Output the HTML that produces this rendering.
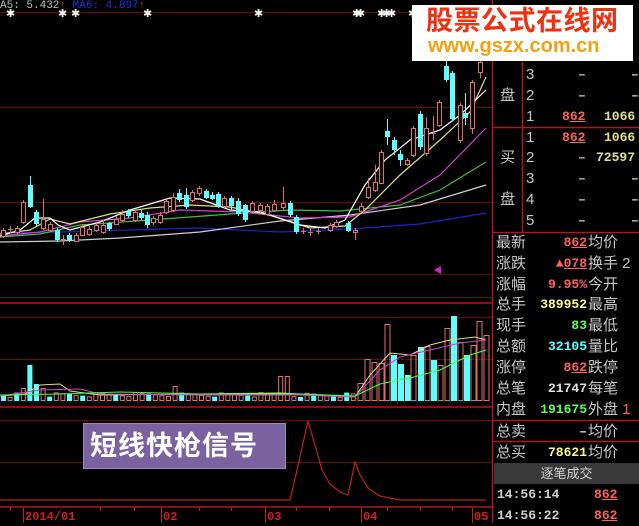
<!DOCTYPE html>
<html><head><meta charset="utf-8"><style>
body{margin:0;width:639px;height:523px;background:#000;overflow:hidden;position:relative;font-family:"Liberation Sans","Noto Sans CJK SC",sans-serif}
.r{position:absolute;left:494px;width:145px;height:20px;font-size:15px;color:#c8c8c8;line-height:20px}
.r .a{position:absolute;left:2px}
.r .v{position:absolute;right:52px;font-family:"Liberation Mono",monospace;font-weight:bold;font-size:13px}
.r .b{position:absolute;left:94px}
.q{position:absolute;font-family:"Liberation Mono",monospace;font-weight:bold;font-size:13px;line-height:20px}
u{text-decoration:underline}
</style></head><body>
<svg width="639" height="523" style="position:absolute;left:0;top:0" xmlns="http://www.w3.org/2000/svg">
<g stroke="#6a0a0a" stroke-width="1">
<line x1="0" y1="12.5" x2="492" y2="12.5"/><line x1="0" y1="107.5" x2="492" y2="107.5"/><line x1="0" y1="202.5" x2="492" y2="202.5"/>
<line x1="0" y1="297.5" x2="492" y2="297.5"/><line x1="0" y1="317.5" x2="492" y2="317.5"/><line x1="0" y1="359.5" x2="492" y2="359.5"/>
<line x1="0" y1="420.5" x2="492" y2="420.5"/><line x1="0" y1="462.5" x2="492" y2="462.5"/>
</g>
<g stroke="#b01818" stroke-width="1.5">
<line x1="0" y1="303" x2="492" y2="303"/><line x1="0" y1="407" x2="492" y2="407"/><line x1="0" y1="507" x2="492" y2="507"/>
<line x1="492.5" y1="0" x2="492.5" y2="523"/><line x1="522.5" y1="62" x2="522.5" y2="232"/>
<line x1="493" y1="127.5" x2="639" y2="127.5"/><line x1="493" y1="232.5" x2="639" y2="232.5"/><line x1="493" y1="420.5" x2="639" y2="420.5"/><line x1="493" y1="441.5" x2="639" y2="441.5"/>
</g>
<line x1="0" y1="274.5" x2="492" y2="274.5" stroke="#5a0a0a"/>
<g stroke="#c02020"><line x1="23.5" y1="507" x2="23.5" y2="523"/><line x1="161.5" y1="507" x2="161.5" y2="523"/><line x1="265.5" y1="507" x2="265.5" y2="523"/><line x1="361.5" y1="507" x2="361.5" y2="523"/><line x1="472.5" y1="507" x2="472.5" y2="523"/>
<line x1="10.5" y1="507" x2="10.5" y2="511"/><line x1="100.5" y1="507" x2="100.5" y2="511"/><line x1="134.5" y1="507" x2="134.5" y2="511"/><line x1="199.5" y1="507" x2="199.5" y2="511"/><line x1="231.5" y1="507" x2="231.5" y2="511"/><line x1="296.5" y1="507" x2="296.5" y2="511"/><line x1="329.5" y1="507" x2="329.5" y2="511"/><line x1="387.5" y1="507" x2="387.5" y2="511"/><line x1="420.5" y1="507" x2="420.5" y2="511"/><line x1="452.5" y1="507" x2="452.5" y2="511"/></g>
<g fill="#d02020" font-family="Liberation Mono,monospace" font-weight="bold" font-size="12"><text x="25" y="520">2014/01</text><text x="163" y="520">02</text><text x="267" y="520">03</text><text x="363" y="520">04</text><text x="474" y="520">05</text></g>
<g fill="none" stroke-width="1.2">
<polyline stroke="#2020d0" points="0,233 60,232 130,230 200,228 280,232 350,229 420,224 486,213"/>
<polyline stroke="#d0d0d0" points="0,242 60,241 120,238 200,232 280,221 350,215 420,205 486,185"/>
<polyline stroke="#40c040" points="0,237 40,234 80,225 150,220 230,214 290,210 340,211 400,205 440,190 486,162"/>
<polyline stroke="#d040d0" points="0,236 40,232 80,222 130,218 180,210 240,212 300,218 350,217 400,200 440,175 486,128"/>
<polyline stroke="#e0e080" points="0,234 30,230 50,219 70,224 110,214 150,208 190,205 230,207 270,215 310,228 345,226 365,210 400,175 440,140 470,112 486,77"/>
<polyline stroke="#ffffff" points="0,236 20,230 35,218 50,218 58,225 70,230 100,222 130,210 170,198 200,199 230,210 260,212 300,225 325,228 345,220 365,185 385,160 410,140 440,130 460,115 486,90"/>
</g>
<g id="cd"></g>
<g fill="none" stroke-width="1">
<polyline stroke="#e0e080" points="0,396 25,394 40,385 60,384 70,391 100,395 200,394 280,393 320,395 355,397 370,375 390,353 410,355 430,345 450,340 475,337 486,340"/>
<polyline stroke="#d040d0" points="0,396 40,390 80,389 100,394 200,395 300,395 355,397 380,370 400,357 430,350 460,343 486,340"/>
<polyline stroke="#40ff40" points="0,395 60,394 120,392 200,394 300,394 355,396 380,384 410,378 440,370 470,355 486,350"/>
</g>
<polyline fill="none" stroke="#c02020" stroke-width="1.2" points="0,500 290,500 297,470 308,421 315,445 322,470 330,484 340,492 348,495 355,462 360,475 368,488 380,496 400,500 486,500"/>
<polygon points="434,270 441,266 441,274" fill="#d020d0"/>
<g fill="#fff" font-size="11" font-weight="bold" font-family="DejaVu Sans,sans-serif"><text x="6" y="17">✱</text><text x="58" y="17">✱</text><text x="71" y="17">✱</text><text x="143" y="17">✱</text><text x="254" y="17">✱</text><text x="352" y="17">✱</text><text x="356" y="17">✱</text><text x="377" y="17">✱</text><text x="382" y="17">✱</text><text x="387" y="17">✱</text><text x="408" y="17">✱</text></g>
</svg>
<div style="position:absolute;left:0;top:0;font-family:'Liberation Mono',monospace;font-size:11px;color:#c0c0c0;white-space:pre;line-height:12px">A5: 5.432<span style="color:#e03030">↑</span> <span style="color:#2030e0">MA6: 4.897</span><span style="color:#e03030">↑</span></div>
<div style="position:absolute;left:412px;top:5px;width:221px;height:56px;background:#fff"></div>
<div style="position:absolute;left:426px;top:5px;font-size:27px;font-weight:bold;color:#f03010;line-height:32px;letter-spacing:0.5px">股票公式在线网</div>
<div style="position:absolute;left:428px;top:35px;font-size:20px;font-weight:bold;color:#f5a010;line-height:22px">www.gszx.com.cn</div>
<div style="position:absolute;left:83px;top:423px;width:203px;height:46px;background:#7a62a0;border:1px solid #9a88c0;box-sizing:border-box;color:#fff;font-size:27px;font-weight:bold;line-height:44px;padding-left:6px;letter-spacing:1px">短线快枪信号</div>
<div class="r" style="top:65px"><span class="a" style="left:32px">3</span><span class="q" style="left:84px">–</span><span class="q" style="left:137px">–</span></div>
<div class="r" style="top:86px"><span class="a">&nbsp;盘</span><span class="a" style="left:32px">2</span><span class="q" style="left:84px">–</span><span class="q" style="left:137px">–</span></div>
<div class="r" style="top:107px"><span class="a" style="left:32px">1</span><span class="q" style="left:68px;color:#ff6060">8<u>62</u></span><span class="q" style="left:110px;color:#e0e090">1066</span></div>
<div class="r" style="top:128px"><span class="a" style="left:32px">1</span><span class="q" style="left:68px;color:#ff6060">8<u>62</u></span><span class="q" style="left:110px;color:#e0e090">1066</span></div>
<div class="r" style="top:148px"><span class="a">&nbsp;买</span><span class="a" style="left:32px">2</span><span class="q" style="left:84px">–</span><span class="q" style="left:102px;color:#e0e090">72597</span></div>
<div class="r" style="top:169px"><span class="a" style="left:32px">3</span><span class="q" style="left:84px">–</span><span class="q" style="left:137px">–</span></div>
<div class="r" style="top:190px"><span class="a">&nbsp;盘</span><span class="a" style="left:32px">4</span><span class="q" style="left:84px">–</span><span class="q" style="left:137px">–</span></div>
<div class="r" style="top:211px"><span class="a" style="left:32px">5</span><span class="q" style="left:84px">–</span><span class="q" style="left:137px">–</span></div>
<div class="r" style="top:233px"><span class="a">最新</span><span class="v" style="color:#ff6060">8<u>62</u></span><span class="b">均价</span></div>
<div class="r" style="top:254px"><span class="a">涨跌</span><span class="v" style="color:#ff6060">▲<u>078</u></span><span class="b">换手 2</span></div>
<div class="r" style="top:275px"><span class="a">涨幅</span><span class="v" style="color:#ff6060">9.95%</span><span class="b">今开</span></div>
<div class="r" style="top:295px"><span class="a">总手</span><span class="v" style="color:#ffff90">389952</span><span class="b">最高</span></div>
<div class="r" style="top:316px"><span class="a">现手</span><span class="v" style="color:#60ff60">83</span><span class="b">最低</span></div>
<div class="r" style="top:337px"><span class="a">总额</span><span class="v" style="color:#60ffff">32105</span><span class="b">量比</span></div>
<div class="r" style="top:358px"><span class="a">涨停</span><span class="v" style="color:#ff6060">8<u>62</u></span><span class="b">跌停</span></div>
<div class="r" style="top:379px"><span class="a">总笔</span><span class="v" style="color:#e0e0e0">21747</span><span class="b">每笔</span></div>
<div class="r" style="top:400px"><span class="a">内盘</span><span class="v" style="color:#60ff60">191675</span><span class="b">外盘 <span style="color:#ff6060">1</span></span></div>
<div class="r" style="top:422px"><span class="a">总卖</span><span class="v" style="color:#e0e0e0">–</span><span class="b">均价</span></div>
<div class="r" style="top:443px"><span class="a">总买</span><span class="v" style="color:#ffff90">78621</span><span class="b">均价</span></div>
<div style="position:absolute;left:494px;top:463px;width:145px;height:21px;background:#3a3a3a;color:#d0d0d0;font-size:13px;line-height:21px;text-align:center">逐笔成交</div>
<div class="r" style="top:485px"><span class="q" style="left:3px;color:#d0d0d0">14:56:14</span><span class="q" style="left:100px;color:#ff6060">8<u>62</u></span></div>
<div class="r" style="top:506px"><span class="q" style="left:3px;color:#d0d0d0">14:56:22</span><span class="q" style="left:100px;color:#ff6060">8<u>62</u></span></div>
<script>
var S='http://www.w3.org/2000/svg',g=document.getElementById('cd');
function el(t,a){var e=document.createElementNS(S,t);for(var k in a)e.setAttribute(k,a[k]);g.appendChild(e);}
var C=[[3,230,236,228,238,'r'],[10,229,230,226,233,'x'],[17,228,232,226,234,'r'],[23,202,222,200,224,'r'],[30,185,207,176,208,'c'],[36,212,224,210,226,'c'],[43,219,228,199,230,'r'],[50,224,230,222,232,'r'],[57,230,240,228,242,'c'],[63,239,240,235,245,'x'],[69,235,240,233,242,'c'],[76,235,241,233,242,'r'],[82,227,235,224,236,'r'],[89,229,234,226,236,'r'],[96,225,230,223,232,'r'],[103,225,232,220,234,'r'],[109,223,229,222,231,'c'],[116,219,224,216,225,'r'],[122,214,220,210,222,'r'],[128,211,216,209,218,'c'],[135,212,220,210,222,'r'],[141,213,218,210,220,'c'],[147,215,225,212,228,'c'],[153,218,222,216,225,'r'],[160,215,222,212,224,'r'],[166,201,212,199,214,'r'],[173,197,210,193,212,'r'],[179,193,200,189,202,'c'],[186,195,207,188,209,'c'],[192,192,200,190,202,'r'],[199,188,193,186,196,'r'],[206,191,198,189,199,'c'],[212,195,199,192,200,'c'],[218,194,206,192,208,'c'],[224,198,206,196,208,'r'],[231,198,206,196,210,'c'],[238,201,214,198,216,'c'],[245,205,220,204,222,'c'],[252,203,211,201,212,'r'],[260,205,210,203,214,'r'],[267,206,214,204,216,'r'],[274,204,210,200,212,'r'],[283,203,207,187,210,'r'],[290,203,215,201,217,'c'],[296,217,232,215,234,'c'],[303,231,232,228,234,'x'],[310,232,233,229,236,'x'],[318,231,232,228,234,'x'],[330,225,230,223,232,'r'],[336,222,226,220,228,'r'],[348,223,231,221,232,'c'],[355,230,232,228,240,'r'],[361,206,211,203,213,'r'],[368,187,197,178,199,'r'],[375,182,190,165,192,'r'],[381,152,183,150,184,'r'],[387,131,137,119,145,'c'],[394,140,150,137,155,'c'],[400,154,160,150,166,'c'],[407,160,164,158,166,'r'],[413,128,155,126,157,'r'],[420,114,147,111,150,'c'],[426,128,153,117,156,'r'],[433,133,135,116,140,'x'],[439,102,125,100,127,'r'],[446,66,80,61,82,'c'],[452,73,119,71,121,'c'],[460,105,140,103,143,'r'],[465,113,118,93,125,'c'],[472,82,128,80,134,'r'],[480,62,72,55,78,'r']];
C.forEach(function(c){var col=c[5]=='c'?'#60ffff':'#e07070';
el('line',{x1:c[0]+.5,y1:c[3],x2:c[0]+.5,y2:c[4],stroke:col});
if(c[5]=='x')el('line',{x1:c[0]-2,y1:c[1]+.5,x2:c[0]+3,y2:c[1]+.5,stroke:col});
else if(c[5]=='c')el('rect',{x:c[0]-2,y:c[1],width:5,height:c[2]-c[1],fill:col});
else el('rect',{x:c[0]-1.5,y:c[1]+.5,width:4,height:c[2]-c[1],fill:'#000',stroke:col});});
var B=401;
for(var x=3;x<358;x+=6.6){var h=4+((x*37)%5),t='r';if(((x*13)|0)%3==0)t='c';
if(Math.abs(x-29)<3){h=36;t='c'}else if(Math.abs(x-35)<3){h=17;t='c'}else if(Math.abs(x-43)<3){h=13;t='r'}else if(Math.abs(x-23)<3){h=13;t='r'}else if(Math.abs(x-172)<3){h=15;t='r'}else if(Math.abs(x-283)<4){h=25;t='r'}
var col=t=='c'?'#60ffff':'#e07070';
if(t=='c')el('rect',{x:x-2,y:B-h,width:5,height:h,fill:col});else el('rect',{x:x-1.5,y:B-h+.5,width:4,height:h-1,fill:'none',stroke:col});}
[[360,383,'r'],[367,359,'r'],[374,362,'r'],[381,363,'r'],[387,324,'r'],[393,355,'c'],[400,364,'c'],[407,375,'c'],[413,355,'r'],[420,347,'c'],[427,346,'r'],[433,360,'c'],[440,365,'r'],[447,328,'r'],[453,316,'c'],[460,342,'r'],[466,355,'c'],[473,345,'r'],[479,321,'r'],[486,335,'r']].forEach(function(v){
if(v[2]=='c')el('rect',{x:v[0]-2,y:v[1],width:6,height:B-v[1],fill:'#60ffff'});else el('rect',{x:v[0]-2,y:v[1]+.5,width:5,height:B-v[1]-1,fill:'none',stroke:'#e07070'});});
</script>
</body></html>
